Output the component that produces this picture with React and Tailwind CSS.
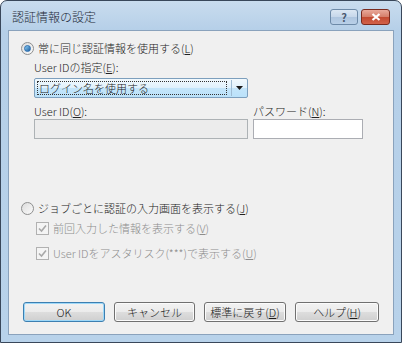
import React from 'react';

const font = { fontFamily: '"Noto Sans CJK JP", "Noto Sans", sans-serif' };

const Acc = ({ k }) => (
  <>
    (<span className="underline underline-offset-1">{k}</span>)
  </>
);

const Radio = ({ checked }) => (
  <span className="w-[13px] h-[13px] rounded-full border border-[#8e8f8f] bg-gradient-to-br from-[#dcdcdc] to-[#fbfbfb] flex items-center justify-center shrink-0">
    {checked && (
      <span className="w-[7px] h-[7px] rounded-full bg-gradient-to-br from-[#8fd2f7] to-[#1b5e9f] border border-[#2a6db0]" />
    )}
  </span>
);

const Check = () => (
  <span className="w-[13px] h-[13px] border border-[#b1b1b1] bg-[#f4f4f4] flex items-center justify-center shrink-0">
    <svg width="9" height="9" viewBox="0 0 9 9">
      <path d="M1 4.5 L3.5 7 L8 1.5" fill="none" stroke="#a8a8a8" strokeWidth="1.6" />
    </svg>
  </span>
);

const Btn = ({ children, primary }) => (
  <button
    className={`w-full h-[20px] rounded-[3px] border bg-[linear-gradient(#f2f2f2_0%,#ebebeb_50%,#dddddd_51%,#cfcfcf_100%)] text-[11px] text-[#1a1a1a] leading-none flex items-center justify-center ${
      primary ? 'border-[#3c7fb1] shadow-[inset_0_0_0_1px_#9ed8f8]' : 'border-[#707070] shadow-[inset_0_0_0_1px_#fbfbfb]'
    }`}
  >
    {children}
  </button>
);

export default function App() {
  return (
    <div className="w-[402px] h-[343px] bg-white font-light" style={font}>
      <div className="w-full h-full rounded-t-[7px] border border-[#39475a] bg-[linear-gradient(#c9dcee_0px,#b5cfe8_30px,#b8d2ea_100%)] flex flex-col">
        <div className="h-[29px] flex items-start justify-between pl-[11px] pr-[11px] shrink-0">
          <span className="mt-[9px] text-[12px] leading-[14px] text-[#1e2a38]">認証情報の設定</span>
          <div className="flex gap-[3px] mt-[8px]">
            <span className="w-[28px] h-[16px] rounded-[3px] border border-[#6d8aa8] bg-[linear-gradient(#dbe7f3_0%,#c6d7ea_50%,#aec5df_51%,#b9d0e8_100%)] flex items-center justify-center text-[11px] font-bold text-[#4a5a70] leading-none">
              ?
            </span>
            <span className="w-[29px] h-[16px] rounded-[3px] border border-[#7a2b1f] bg-[linear-gradient(#e9a99a_0%,#d47d69_50%,#c24a31_51%,#d2624a_100%)] flex items-center justify-center">
              <svg width="10" height="8" viewBox="0 0 10 8">
                <path d="M1.5 1 L8.5 7 M8.5 1 L1.5 7" stroke="white" strokeWidth="2.2" />
              </svg>
            </span>
          </div>
        </div>
        <div className="flex-1 mx-[7px] mb-[7px] border border-[#8aa2bc] bg-[#f0f0f0] flex flex-col pl-[12px] text-[11px] text-[#222]">
          <div className="mt-[10px] flex items-center gap-[4px] h-[14px]">
            <Radio checked />
            <span className="leading-none">
              常に同じ認証情報を使用する<Acc k="L" />
            </span>
          </div>
          <div className="pl-[13px] flex flex-col">
            <span className="mt-[5px] leading-[14px]">
              User IDの指定<Acc k="E" />:
            </span>
            <div className="mt-[4px] w-[214px] h-[20px] rounded-[2px] border border-[#7d9fbd] bg-[linear-gradient(#f2f9fd_0%,#e0f1fc_50%,#c4e5fa_51%,#bbe2fa_100%)] flex items-center pl-[2px] pr-[4px]">
              <span className="flex-1 h-[14px] border border-dotted border-[#333] flex items-center pl-[1px] leading-none">
                ログイン名を使用する
              </span>
              <span className="w-[1px] h-[16px] bg-[#9fbcd4] mx-[4px]" />
              <svg width="7" height="4" viewBox="0 0 7 4">
                <path d="M0 0 H7 L3.5 4 Z" fill="#1a1a1a" />
              </svg>
            </div>
            <div className="flex gap-[5px] mt-[6px]">
              <div className="flex flex-col w-[214px]">
                <span className="leading-[14px]">
                  User ID<Acc k="O" />:
                </span>
                <div className="mt-[1px] h-[20px] border border-[#adb2b5] bg-[#ececec]" />
              </div>
              <div className="flex flex-col w-[110px]">
                <span className="leading-[14px]">
                  パスワード<Acc k="N" />:
                </span>
                <div className="mt-[1px] h-[20px] border border-[#abadb3] bg-white" />
              </div>
            </div>
          </div>
          <div className="mt-[62px] flex items-center gap-[4px] h-[14px]">
            <Radio />
            <span className="leading-none">
              ジョブごとに認証の入力画面を表示する<Acc k="J" />
            </span>
          </div>
          <div className="pl-[15px] flex flex-col text-[#8d8d8d]">
            <div className="mt-[6px] flex items-center gap-[4px] h-[14px]">
              <Check />
              <span className="leading-none">
                前回入力した情報を表示する<Acc k="V" />
              </span>
            </div>
            <div className="mt-[11px] flex items-center gap-[4px] h-[14px]">
              <Check />
              <span className="leading-none">
                User IDをアスタリスク(***)で表示する<Acc k="U" />
              </span>
            </div>
          </div>
          <div className="mt-auto mb-[12px] flex gap-[9px] pl-[2px]">
            <div className="w-[82px]"><Btn primary>OK</Btn></div>
            <div className="w-[81px]"><Btn>キャンセル</Btn></div>
            <div className="w-[82px]"><Btn>標準に戻す<Acc k="D" /></Btn></div>
            <div className="w-[84px]"><Btn>ヘルプ<Acc k="H" /></Btn></div>
          </div>
        </div>
      </div>
    </div>
  );
}
